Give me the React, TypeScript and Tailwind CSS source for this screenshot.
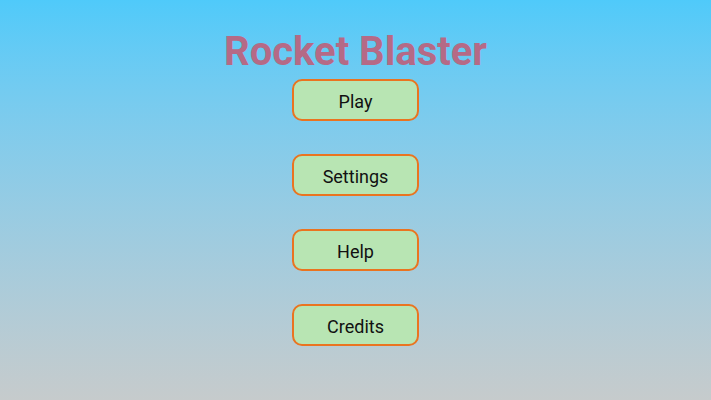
export default function App() {
  const items = ["Play", "Settings", "Help", "Credits"];
  return (
    <div
      className="w-[711px] h-[400px] flex flex-col items-center bg-gradient-to-b from-[#4fcafa] to-[#c6cbcc]"
      style={{ fontFamily: "Roboto, 'Liberation Sans', sans-serif" }}
    >
      <h1 className="mt-[28px] text-[40px] leading-[48px] font-bold text-[#b56a86]">
        Rocket Blaster
      </h1>
      <div className="mt-[3px] flex flex-col gap-[33px]">
        {items.map((label) => (
          <button
            key={label}
            className="w-[127px] h-[42px] pt-[2px] rounded-[10px] border-2 border-[#ea7420] bg-[#b8e5b3] text-[18px] text-[#111] flex items-center justify-center"
          >
            {label}
          </button>
        ))}
      </div>
    </div>
  );
}
